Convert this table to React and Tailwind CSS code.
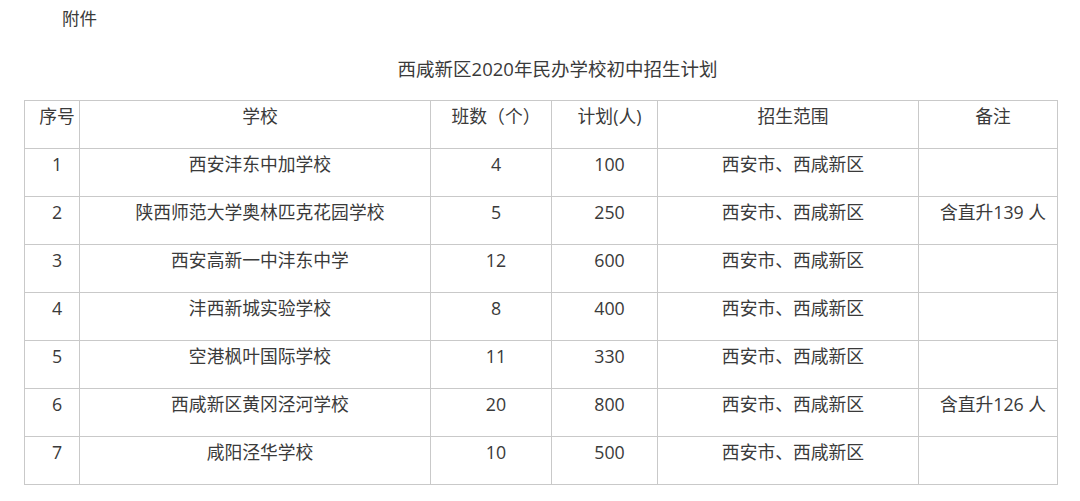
import React from "react";

const rows = [
  ["1", "西安沣东中加学校", "4", "100", "西安市、西咸新区", ""],
  ["2", "陕西师范大学奥林匹克花园学校", "5", "250", "西安市、西咸新区", "含直升139 人"],
  ["3", "西安高新一中沣东中学", "12", "600", "西安市、西咸新区", ""],
  ["4", "沣西新城实验学校", "8", "400", "西安市、西咸新区", ""],
  ["5", "空港枫叶国际学校", "11", "330", "西安市、西咸新区", ""],
  ["6", "西咸新区黄冈泾河学校", "20", "800", "西安市、西咸新区", "含直升126 人"],
  ["7", "咸阳泾华学校", "10", "500", "西安市、西咸新区", ""],
];

const head = ["序号", "学校", "班数（个）", "计划(人)", "招生范围", "备注"];

function Cell({ children }) {
  return (
    <td className="border border-[#c9c9c9] align-top pt-[3px] pl-[10px] pr-0 text-center leading-[24px] whitespace-nowrap">
      {children}
    </td>
  );
}

export default function App() {
  return (
    <div className="bg-white w-[1080px] h-[501px] overflow-hidden pl-[24px] text-[#3a3a3a] font-['Open_Sans','Noto_Sans_CJK_SC',sans-serif]">
      <p className="pt-[6px] pl-[38px] text-[17.5px] leading-[24px]">附件</p>
      <p className="mt-[27px] w-[1033px] pl-[34px] text-center text-[18.5px] leading-[24px]">
        西咸新区2020年民办学校初中招生计划
      </p>
      <table className="mt-[19px] w-[1033px] table-fixed border-collapse text-[17.8px]">
        <colgroup>
          <col className="w-[55px]" />
          <col className="w-[351px]" />
          <col className="w-[121px]" />
          <col className="w-[106px]" />
          <col className="w-[261px]" />
          <col className="w-[139px]" />
        </colgroup>
        <tbody>
          <tr className="h-[48px]">
            {head.map((h) => (
              <Cell key={h}>{h}</Cell>
            ))}
          </tr>
          {rows.map((r) => (
            <tr key={r[0]} className="h-[48px]">
              {r.map((c, i) => (
                <Cell key={i}>{c}</Cell>
              ))}
            </tr>
          ))}
        </tbody>
      </table>
    </div>
  );
}
